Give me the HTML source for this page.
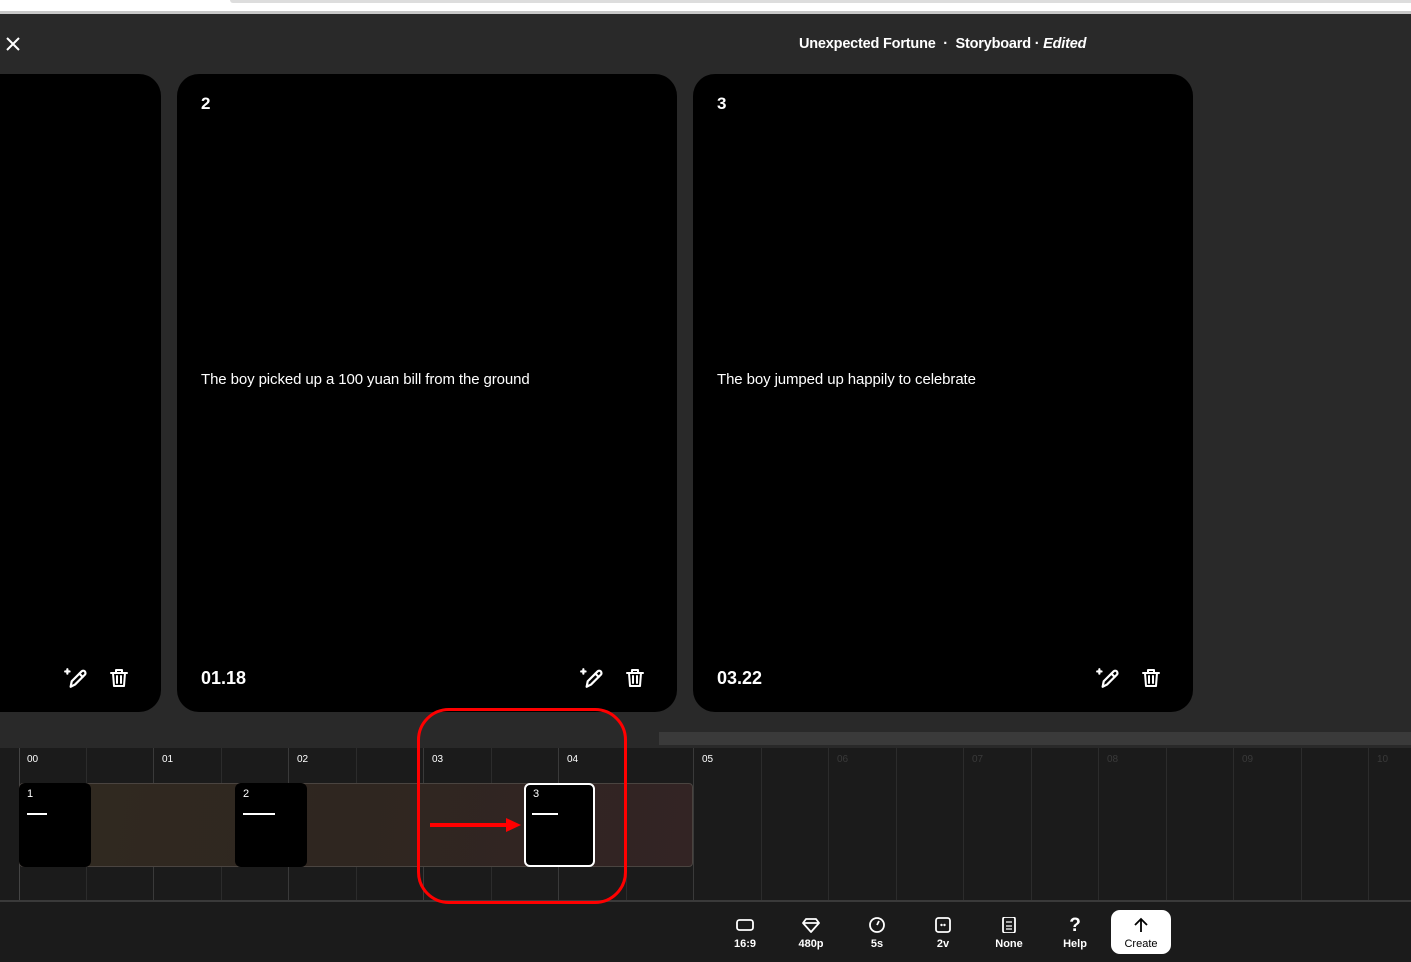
<!DOCTYPE html>
<html><head><meta charset="utf-8"><style>
*{margin:0;padding:0;box-sizing:border-box}
body{width:1411px;height:962px;overflow:hidden;background:#292929;font-family:"Liberation Sans",sans-serif;color:#fff;position:relative}
.abs{position:absolute}
.card{position:absolute;top:74px;height:638px;width:500px;background:#000;border-radius:22px}
.num{position:absolute;left:24px;top:20px;font-size:17px;font-weight:bold}
.txt{position:absolute;left:24px;top:297px;font-size:15px;letter-spacing:-0.1px}
.time{position:absolute;left:24px;top:594px;font-size:18px;font-weight:bold}
.gl{position:absolute;top:748px;height:153px;width:1px;background:#2c2c2c}
.lb{position:absolute;top:754px;font-size:10px}
.th{position:absolute;top:783px;width:72px;height:84px;background:#000;border-radius:6px}
.th span{position:absolute;left:8px;top:5px;font-size:11px}
.th i{position:absolute;left:8px;top:30px;height:2px;background:#fff}
.bt{position:absolute;top:917px;width:60px;text-align:center;font-size:11px;font-weight:bold}
.bt svg{display:block;margin:0 auto 5px}
</style></head><body>
<div class="abs" style="left:0;top:0;width:1411px;height:12px;background:#fff"></div>
<div class="abs" style="left:230px;top:0;width:1181px;height:3px;background:#ddd;border-radius:0 0 0 8px"></div>
<div class="abs" style="left:0;top:11px;width:1411px;height:3px;background:#c8c8c8"></div>
<svg class="abs" style="left:6px;top:37px" width="14" height="14" viewBox="0 0 14 14"><path d="M1 1L13 13M13 1L1 13" stroke="#fff" stroke-width="2"/></svg>
<div class="abs" style="left:799px;top:36px;font-size:14.5px;font-weight:bold;letter-spacing:-0.2px">Unexpected Fortune &nbsp;·&nbsp; Storyboard · <i>Edited</i></div>

<div class="card" style="left:-339px"></div>
<div class="card" style="left:177px"><div class="num">2</div><div class="txt">The boy picked up a 100 yuan bill from the ground</div><div class="time">01.18</div></div>
<div class="card" style="left:693px"><div class="num">3</div><div class="txt">The boy jumped up happily to celebrate</div><div class="time">03.22</div></div>

<svg width="0" height="0" style="position:absolute"><defs>
<g id="pen" fill="none" stroke="#fff" stroke-width="2" stroke-linecap="round" stroke-linejoin="round"><path d="M7 19l1-5L17 5a2 2 0 0 1 3 3l-9 9z"/><path d="M15 7l3 3"/><path d="M4 3v4M2 5h4"/></g>
<g id="bin" fill="none" stroke="#fff" stroke-width="2" stroke-linecap="round" stroke-linejoin="round"><path d="M3 6h16M8 6V3h6v3M5 6l1 13h10l1-13M9 9v7M13 9v7"/></g>
</defs></svg>
<svg class="abs" style="left:63px;top:666px" width="24" height="24" viewBox="0 0 22 22"><use href="#pen"/></svg>
<svg class="abs" style="left:108px;top:667px" width="22" height="22" viewBox="0 0 22 22"><use href="#bin"/></svg>
<svg class="abs" style="left:579px;top:666px" width="24" height="24" viewBox="0 0 22 22"><use href="#pen"/></svg>
<svg class="abs" style="left:624px;top:667px" width="22" height="22" viewBox="0 0 22 22"><use href="#bin"/></svg>
<svg class="abs" style="left:1095px;top:666px" width="24" height="24" viewBox="0 0 22 22"><use href="#pen"/></svg>
<svg class="abs" style="left:1140px;top:667px" width="22" height="22" viewBox="0 0 22 22"><use href="#bin"/></svg>

<div class="abs" style="left:659px;top:732px;width:752px;height:13px;background:#3a3a3a"></div>
<div class="abs" style="left:0;top:748px;width:1411px;height:214px;background:#1b1b1b"></div>
<div class="gl" style="left:19px;background:#444"></div><div class="gl" style="left:86px"></div><div class="gl" style="left:153px;background:#3a3a3a"></div><div class="gl" style="left:221px"></div><div class="gl" style="left:288px;background:#3a3a3a"></div><div class="gl" style="left:356px"></div><div class="gl" style="left:423px;background:#3a3a3a"></div><div class="gl" style="left:491px"></div><div class="gl" style="left:558px;background:#3a3a3a"></div><div class="gl" style="left:626px"></div><div class="gl" style="left:693px;background:#3a3a3a"></div><div class="gl" style="left:761px"></div><div class="gl" style="left:828px"></div><div class="gl" style="left:896px"></div><div class="gl" style="left:963px"></div><div class="gl" style="left:1031px"></div><div class="gl" style="left:1098px"></div><div class="gl" style="left:1166px"></div><div class="gl" style="left:1233px"></div><div class="gl" style="left:1301px"></div><div class="gl" style="left:1368px"></div>
<div class="lb" style="left:27px">00</div><div class="lb" style="left:162px">01</div><div class="lb" style="left:297px">02</div><div class="lb" style="left:432px">03</div><div class="lb" style="left:567px">04</div><div class="lb" style="left:702px">05</div>
<div class="lb" style="left:837px;color:#3a3a3a">06</div><div class="lb" style="left:972px;color:#3a3a3a">07</div><div class="lb" style="left:1107px;color:#3a3a3a">08</div><div class="lb" style="left:1242px;color:#3a3a3a">09</div><div class="lb" style="left:1377px;color:#3a3a3a">10</div>
<div class="abs" style="left:19px;top:783px;width:674px;height:84px;border:1px solid #4a4440;border-radius:4px;background:linear-gradient(100deg,#302a20,#2f2620 50%,#332424)"></div>
<div class="th" style="left:19px"><span>1</span><i style="width:20px"></i></div>
<div class="th" style="left:235px"><span>2</span><i style="width:32px"></i></div>
<div class="th" style="left:524px;width:71px;border:2px solid #fff"><span style="left:7px;top:3px">3</span><i style="left:6px;top:28px;width:26px"></i></div>
<div class="abs" style="left:0;top:900px;width:1411px;height:2px;background:#3a3a3a"></div>

<div class="abs" style="left:417px;top:708px;width:210px;height:196px;border:3px solid #f00;border-radius:32px"></div>
<svg class="abs" style="left:428px;top:816px" width="96" height="18"><path d="M2 9H80" stroke="#f00" stroke-width="4"/><path d="M78 2L93 9L78 16z" fill="#f00"/></svg>

<div class="bt" style="left:715px"><svg width="20" height="16" viewBox="0 0 20 16"><rect x="2" y="3" width="16" height="10" rx="2.5" fill="none" stroke="#fff" stroke-width="1.8"/></svg>16:9</div>
<div class="bt" style="left:781px"><svg width="20" height="16" viewBox="0 0 20 16"><path d="M2 6L5 2h10l3 4-8 9z M2 6h16" fill="none" stroke="#fff" stroke-width="1.8" stroke-linejoin="round"/></svg>480p</div>
<div class="bt" style="left:847px"><svg width="20" height="16" viewBox="0 0 20 16"><circle cx="10" cy="8" r="7" fill="none" stroke="#fff" stroke-width="1.8"/><path d="M10 8l2-4" stroke="#fff" stroke-width="1.8"/></svg>5s</div>
<div class="bt" style="left:913px"><svg width="20" height="16" viewBox="0 0 20 16"><rect x="3" y="1" width="14" height="14" rx="2.5" fill="none" stroke="#fff" stroke-width="1.8"/><circle cx="8.5" cy="8" r="1.2" fill="#fff"/><circle cx="11.5" cy="8" r="1.2" fill="#fff"/></svg>2v</div>
<div class="bt" style="left:979px"><svg width="20" height="16" viewBox="0 0 20 16"><rect x="4" y="0" width="12" height="16" rx="2" fill="none" stroke="#fff" stroke-width="1.8"/><path d="M7 5h6M7 9h6M7 12h6" stroke="#fff" stroke-width="1.3"/></svg>None</div>
<div class="bt" style="left:1045px"><div style="font-size:19px;height:21px;line-height:18px">?</div>Help</div>
<div class="abs" style="left:1111px;top:910px;width:60px;height:44px;background:#fff;border-radius:9px"></div>
<div class="bt" style="left:1111px;color:#000;font-weight:normal"><svg width="20" height="16" viewBox="0 0 20 16"><path d="M10 15V2M4 8l6-6 6 6" fill="none" stroke="#000" stroke-width="1.8"/></svg>Create</div>
</body></html>
